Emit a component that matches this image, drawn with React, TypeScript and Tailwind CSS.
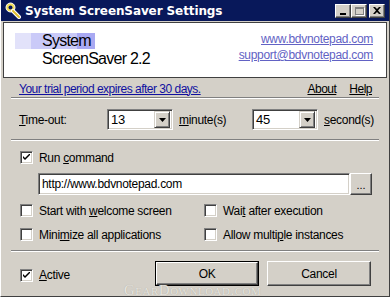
import React from "react";

const U = ({ children }: { children: React.ReactNode }) => <span className="underline">{children}</span>;

function Check({ checked }: { checked?: boolean }) {
  return (
    <div className="w-[13px] h-[13px] bg-white border border-t-[#808080] border-l-[#808080] border-r-white border-b-white shadow-[inset_1px_1px_0_#404040,inset_-1px_-1px_0_#d4d0c8] flex items-center justify-center shrink-0">
      {checked && (
        <svg width="7" height="7" viewBox="0 0 7 7">
          <path d="M0 2 L0 4 L2 6 L7 1 L7 -1 L2 4 Z" fill="#000" />
        </svg>
      )}
    </div>
  );
}

function Combo({ value }: { value: string }) {
  return (
    <div className="w-[66px] h-[21px] bg-white border border-t-[#808080] border-l-[#808080] border-r-white border-b-white shadow-[inset_1px_1px_0_#404040,inset_-1px_-1px_0_#d4d0c8] flex items-center p-[2px]">
      <span className="flex-1 pl-[1px] text-[13px] leading-none text-black">{value}</span>
      <div className="w-[16px] h-[17px] bg-[#d4d0c8] border border-t-[#d4d0c8] border-l-[#d4d0c8] border-r-[#404040] border-b-[#404040] shadow-[inset_1px_1px_0_#fff,inset_-1px_-1px_0_#808080] flex items-center justify-center">
        <svg width="7" height="4" viewBox="0 0 7 4">
          <path d="M0 0 H7 L3.5 4 Z" fill="#000" />
        </svg>
      </div>
    </div>
  );
}

function Sep() {
  return <div className="mx-[10px] h-[2px] border-t border-t-[#808080] border-b border-b-white" />;
}

function Btn({ children, def }: { children: React.ReactNode; def?: boolean }) {
  return (
    <div className={"h-[25px] w-[104px] flex " + (def ? "border border-black" : "")}>
      <div className="flex-1 bg-[#d4d0c8] border border-t-white border-l-white border-r-[#404040] border-b-[#404040] shadow-[inset_-1px_-1px_0_#808080] flex items-center justify-center text-[12px] text-black">
        {children}
      </div>
    </div>
  );
}

function TitleBtn({ kind }: { kind: "min" | "max" | "close" }) {
  return (
    <div className="w-[16px] h-[14px] bg-[#d4d0c8] border border-t-white border-l-white border-r-[#404040] border-b-[#404040] shadow-[inset_-1px_-1px_0_#808080] flex items-center justify-center">
      {kind === "min" && <div className="w-[6px] h-[2px] bg-black mt-[6px] -ml-[1px]" />}
      {kind === "max" && (
        <div className="w-[9px] h-[8px] border border-[#808080] border-t-2 shadow-[1px_1px_0_#fff]" />
      )}
      {kind === "close" && (
        <svg width="8" height="7" viewBox="0 0 8 7">
          <path d="M0 0 H2 L4 2 L6 0 H8 L5 3.5 L8 7 H6 L4 5 L2 7 H0 L3 3.5 Z" fill="#000" />
        </svg>
      )}
    </div>
  );
}

export default function App() {
  return (
    <div
      className="relative w-[390px] h-[297px] bg-[#d4d0c8] overflow-hidden border-r border-r-[#404040] border-b border-b-[#404040] border-l border-l-white"
      style={{ fontFamily: '"Liberation Sans", Arial, sans-serif' }}
    >
      {/* Title bar */}
      <div className="h-[21px] bg-[#08185a] flex items-center pl-[4px] pr-[4px]">
        <svg width="17" height="17" viewBox="0 0 17 17" className="mr-[3px]">
          <circle cx="5.5" cy="5.5" r="4.5" fill="#f4e05a" stroke="#fff" strokeWidth="1" />
          <circle cx="5.5" cy="5.5" r="2" fill="#08185a" />
          <path d="M8 9 L14 15" stroke="#fff" strokeWidth="4" strokeLinecap="round" />
          <path d="M8 9 L14 15" stroke="#e0c030" strokeWidth="2" strokeLinecap="round" />
        </svg>
        <span
          className="text-white font-bold text-[12px] leading-none flex-1 tracking-[-0.1px]"
          style={{ fontFamily: '"DejaVu Sans", Verdana, sans-serif' }}
        >
          System ScreenSaver Settings
        </span>
        <div className="flex items-center">
          <TitleBtn kind="min" />
          <TitleBtn kind="max" />
          <div className="w-[2px]" />
          <TitleBtn kind="close" />
        </div>
      </div>

      {/* Header */}
      <div className="mx-[2px] mt-[1px] h-[56px] bg-white border border-[#404040] flex items-start">
        <div className="relative mt-[10px] ml-[11px]">
          <div className="flex h-[16px]">
            <div className="w-[16px] bg-[#e2e2fa]" />
            <div className="w-[46px] bg-[#cacaf8]" />
            <div className="w-[18px] bg-[#a9a9f2]" />
          </div>
          <div className="absolute left-[27px] top-[-2px] text-[16px] leading-[20px] text-black tracking-[-0.75px]">System</div>
          <div className="ml-[27px] mt-[2px] text-[16px] leading-[16px] text-black tracking-[-0.75px]">ScreenSaver 2.2</div>
        </div>
        <div className="ml-auto mr-[13px] mt-[10px] flex flex-col items-end gap-[4px] text-[12px] leading-[12px] text-[#6262c4] tracking-[-0.3px]">
          <span className="underline">www.bdvnotepad.com</span>
          <span className="underline">support@bdvnotepad.com</span>
        </div>
      </div>

      {/* Trial row */}
      <div className="flex items-center h-[17px] mt-[2px] pl-[18px] pr-[17px] text-[12px] tracking-[-0.5px]">
        <span className="underline text-[#1010a0]">Your trial period expires after 30 days.</span>
        <span className="ml-auto underline text-black">About</span>
        <span className="ml-[13px] underline text-black">Help</span>
      </div>
      <Sep />

      {/* Time-out row */}
      <div className="flex items-center h-[21px] mt-[10px] pl-[18px] text-[12px] tracking-[-0.3px] text-black">
        <span className="w-[88px]"><U>T</U>ime-out:</span>
        <Combo value="13" />
        <span className="ml-[6px] w-[73px]"><U>m</U>inute(s)</span>
        <Combo value="45" />
        <span className="ml-[6px]"><U>s</U>econd(s)</span>
      </div>
      <div className="h-[9px]" />
      <Sep />

      {/* Run command */}
      <div className="flex items-center mt-[10px] pl-[19px] text-[12px] tracking-[-0.3px] text-black h-[13px]">
        <Check checked />
        <span className="ml-[6px]">Run <U>c</U>ommand</span>
      </div>
      <div className="flex mt-[9px] ml-[37px] h-[22px]">
        <div className="w-[312px] bg-white border border-t-[#808080] border-l-[#808080] border-r-white border-b-white shadow-[inset_1px_1px_0_#404040,inset_-1px_-1px_0_#d4d0c8] flex items-center pl-[3px] text-[12px] tracking-[-0.3px] text-black">
          http://www.bdvnotepad.com
        </div>
        <div className="w-[22px] bg-[#d4d0c8] border border-t-white border-l-white border-r-[#404040] border-b-[#404040] shadow-[inset_-1px_-1px_0_#808080] flex items-center justify-center text-[11px] text-black pt-[2px]">
          ...
        </div>
      </div>

      {/* Options */}
      <div className="grid grid-cols-[184px_1fr] gap-y-[11px] mt-[9px] pl-[19px] text-[12px] tracking-[-0.3px] text-black">
        <div className="flex items-center h-[13px]"><Check /><span className="ml-[6px]">Start with <U>w</U>elcome screen</span></div>
        <div className="flex items-center h-[13px]"><Check /><span className="ml-[6px]">Wai<U>t</U> after execution</span></div>
        <div className="flex items-center h-[13px]"><Check /><span className="ml-[6px]">Mini<U>m</U>ize all applications</span></div>
        <div className="flex items-center h-[13px]"><Check /><span className="ml-[6px]">Allow multi<U>p</U>le instances</span></div>
      </div>
      <div className="h-[9px]" />
      <Sep />

      {/* Bottom row */}
      <div className="flex items-center mt-[9px] pl-[19px] text-[12px] tracking-[-0.3px] text-black">
        <div className="flex items-center w-[135px] mt-[3px]">
          <Check checked />
          <span className="ml-[6px]"><U>A</U>ctive</span>
        </div>
        <Btn def>OK</Btn>
        <div className="w-[8px]" />
        <Btn>Cancel</Btn>
      </div>

      {/* Watermark */}
      <div
        className="absolute left-[123px] top-[283px] text-[15px] leading-[14px] text-[#e6e4de] tracking-[0.5px]"
        style={{ fontFamily: '"Liberation Serif", serif', fontVariant: "small-caps", textShadow: "0 0 1px #a8a59d" }}
      >
        GearDownload.com
      </div>
    </div>
  );
}
